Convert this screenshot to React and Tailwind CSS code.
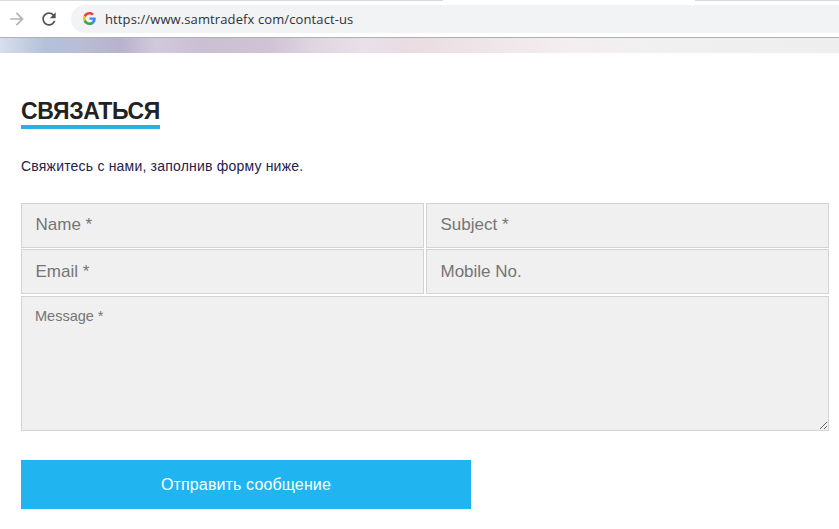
import { useState } from 'react';

const fields = [
  { name: 'name', label: 'Name *', pad: 'pb-px' },
  { name: 'subject', label: 'Subject *', pad: 'pb-px' },
  { name: 'email', label: 'Email *', pad: 'pt-px' },
  { name: 'mobile', label: 'Mobile No.', pad: 'pt-px' },
];

const fieldStyle =
  'block w-full rounded-none border border-[#d3d3d3] bg-[#f0f0f0] text-[#333] placeholder:text-[#757575] placeholder:opacity-100 outline-none';

function GoogleIcon() {
  return (
    <svg viewBox="0 0 48 48" className="size-[13px] shrink-0">
      <path fill="#EA4335" d="M24 9.5c3.54 0 6.71 1.22 9.21 3.6l6.85-6.85C35.9 2.38 30.47 0 24 0 14.62 0 6.51 5.38 2.56 13.22l7.98 6.19C12.43 13.72 17.74 9.5 24 9.5z" />
      <path fill="#4285F4" d="M46.98 24.55c0-1.57-.15-3.09-.38-4.55H24v9.02h12.94c-.58 2.96-2.26 5.48-4.78 7.18l7.73 6c4.51-4.18 7.09-10.36 7.09-17.65z" />
      <path fill="#FBBC05" d="M10.53 28.59c-.48-1.45-.76-2.99-.76-4.59s.27-3.14.76-4.59l-7.98-6.19C.92 16.46 0 20.12 0 24c0 3.88.92 7.54 2.56 10.78l7.97-6.19z" />
      <path fill="#34A853" d="M24 48c6.48 0 11.93-2.13 15.89-5.81l-7.73-6c-2.15 1.45-4.92 2.3-8.16 2.3-6.26 0-11.57-4.22-13.47-9.91l-7.98 6.19C6.51 42.62 14.62 48 24 48z" />
    </svg>
  );
}

function BrowserBar() {
  return (
    <div className="relative flex h-[38px] items-center border-b border-[#b0b0b2] bg-white pl-[7px]">
      {/* Bottom edge of the tab strip, open under the active tab */}
      <div className="absolute inset-x-0 top-0 flex h-px justify-between">
        <div className="w-[443px] bg-[#d8dadd]" />
        <div className="w-[144px] bg-[#d8dadd]" />
      </div>
      <svg viewBox="0 0 24 24" className="size-5 shrink-0 fill-[#b4b4b4]">
        <path d="M12 4l-1.41 1.41L16.17 11H4v2h12.17l-5.58 5.59L12 20l8-8z" />
      </svg>
      <svg viewBox="0 0 24 24" className="ml-3 size-5 shrink-0 fill-[#4f5154]">
        <path d="M17.65 6.35C16.2 4.9 14.21 4 12 4c-4.42 0-7.99 3.58-7.99 8s3.57 8 7.99 8c3.73 0 6.84-2.55 7.73-6h-2.08c-.82 2.33-3.04 4-5.65 4-3.31 0-6-2.69-6-6s2.69-6 6-6c1.66 0 3.14.69 4.22 1.78L13 11h7V4l-2.35 2.35z" />
      </svg>
      <div className="ml-3 flex h-7 flex-1 items-center rounded-l-full bg-[#f1f3f4] pl-3">
        <GoogleIcon />
        <span className="ml-[9px] pt-[3px] font-['Open_Sans',sans-serif] text-[13px] tracking-[0.11px] whitespace-pre text-[#2f3135]">
          https://www.samtradefx com/contact-us
        </span>
      </div>
    </div>
  );
}

export default function App() {
  const [values, setValues] = useState({});

  const handleChange = (e) => {
    const { name, value } = e.target;
    setValues((prev) => ({ ...prev, [name]: value }));
  };

  return (
    <div className="h-[529px] w-[839px] overflow-hidden bg-white font-['Liberation_Sans',Arial,sans-serif]">
      <BrowserBar />
      <div className="h-[15px] bg-[linear-gradient(90deg,#d8dfed_0px,#b3c1da_45px,#b9bdd6_80px,#b8b1ce_120px,#d0c9dc_155px,#cbbfd2_205px,#d0c3d5_270px,#e0d6e2_315px,#e9e0e9_365px,#e9dce2_410px,#eee4e7_475px,#f3edef_560px,#f1f0f1_650px,#eeeeee_839px)]" />

      <main className="pt-[44px] pr-[10px] pl-[21px]">
        <h1 className="w-[139px] border-b-4 border-[#2bb0e3] text-[23px] leading-[28px] font-bold tracking-[-0.35px] whitespace-nowrap text-[#222]">
          СВЯЗАТЬСЯ
        </h1>
        <p className="mt-[27px] text-sm leading-5 tracking-[0.2px] whitespace-nowrap text-[#25214d]">
          Свяжитесь с нами, заполнив форму ниже.
        </p>

        <form className="mt-[27px]" onSubmit={(e) => e.preventDefault()}>
          <div className="grid grid-cols-2 gap-x-[2px] gap-y-px">
            {fields.map((field) => (
              <input
                key={field.name}
                name={field.name}
                placeholder={field.label}
                value={values[field.name] || ''}
                onChange={handleChange}
                className={`${fieldStyle} ${field.pad} h-[45px] px-[13.5px] text-[17px]`}
              />
            ))}
          </div>
          <textarea
            name="message"
            placeholder="Message *"
            value={values.message || ''}
            onChange={handleChange}
            className={`${fieldStyle} mt-[2px] h-[135px] resize px-[13px] py-[9px] text-[14.5px] leading-5`}
          />
          <button
            type="submit"
            className="mt-[29px] block h-[49px] w-[450px] bg-[#20b4f1] text-base tracking-[0.13px] text-white"
          >
            Отправить сообщение
          </button>
        </form>
      </main>
    </div>
  );
}
